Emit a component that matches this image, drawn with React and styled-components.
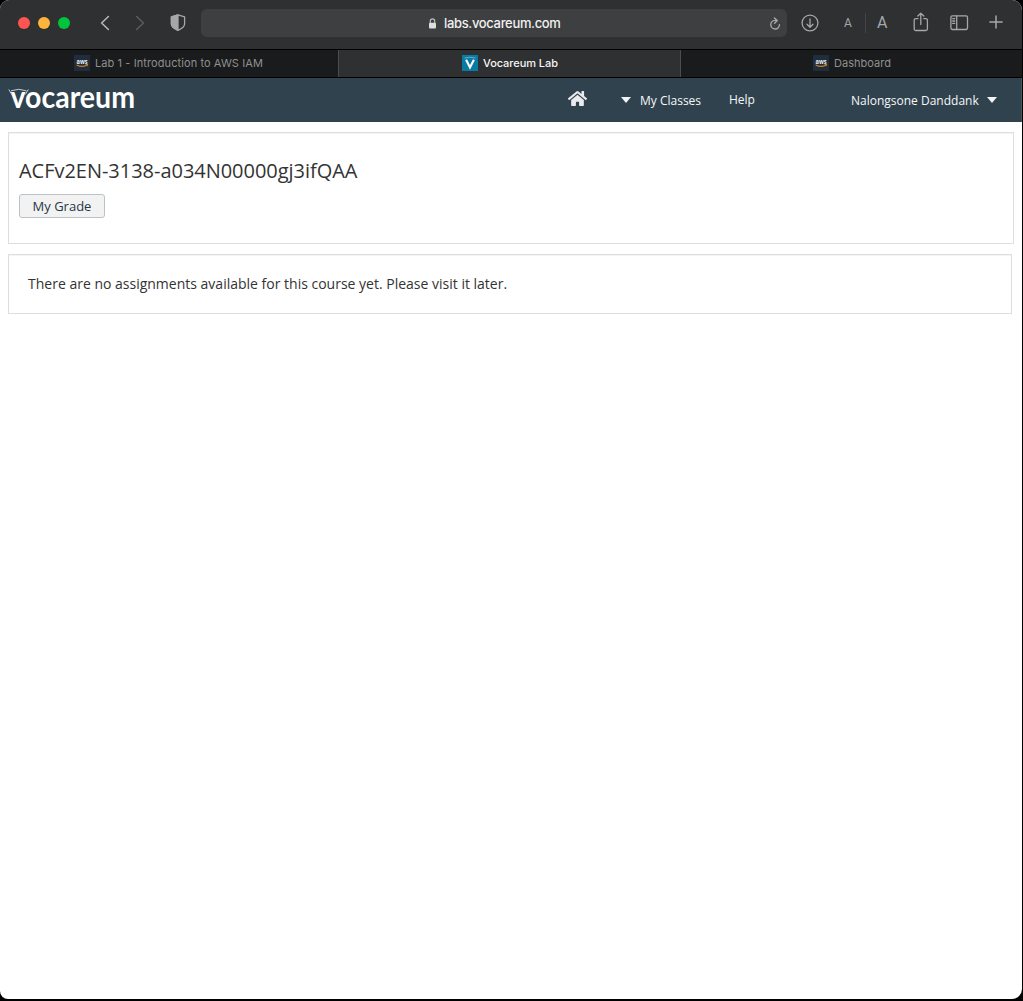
import React from 'react';
import styled, { createGlobalStyle } from 'styled-components';
import { FaHome } from 'react-icons/fa';

const Global = createGlobalStyle`
  * { box-sizing: border-box; }
  html, body { margin: 0; background: #000; }
  #root { height: 1001px; overflow: hidden; }
`;

const Window = styled.div`
  width: 1022px;
  height: 999px;
  display: flex;
  flex-direction: column;
  overflow: hidden;
  background: #fff;
  border-radius: 9px 10px 10px 8px;
  font-family: 'Open Sans', 'Noto Sans', sans-serif;
`;

const Toolbar = styled.header`
  height: 50px;
  flex: none;
  display: flex;
  align-items: flex-start;
  background: #2f3032;
  border-bottom: 1px solid #000;
  padding-left: 18px;
`;

const Lights = styled.div`
  display: flex;
  gap: 8px;
  padding-top: 17px;
`;

const Light = styled.span`
  width: 12px;
  height: 12px;
  border-radius: 50%;
  background: ${(p) => p.$color};
`;

const Glyph = styled.svg`
  display: block;
  flex: none;
  fill: none;
  stroke: ${(p) => p.$color || '#a6a7a8'};
  stroke-width: ${(p) => p.$weight || 1.3};
  stroke-linecap: round;
  stroke-linejoin: round;
  margin-left: ${(p) => p.$left || 0}px;
  margin-top: ${(p) => p.$top || 0}px;
`;

const Address = styled.div`
  display: flex;
  align-items: center;
  width: 586px;
  height: 28px;
  margin: 9px 0 0 15px;
  border-radius: 6px;
  background: #3e3f41;
  padding-left: 227px;
`;

const Url = styled.span`
  width: 118px;
  margin-left: 7px;
  white-space: nowrap;
  font: 500 13px/28px Inter, sans-serif;
  letter-spacing: -0.34px;
  color: #f1f1f1;
`;

const SizeLetter = styled.span`
  width: 10px;
  margin-left: ${(p) => p.$left}px;
  margin-top: 13px;
  text-align: center;
  font: 400 ${(p) => p.$size}px/20px Roboto, sans-serif;
  color: #a6a7a8;
`;

const Divider = styled.span`
  width: 1px;
  height: 20px;
  margin: 13px 0 0 12px;
  background: #434446;
`;

const Tabs = styled.nav`
  height: 28px;
  flex: none;
  display: grid;
  grid-template-columns: 338px 343px 1fr;
  border-bottom: 1px solid #000;
  background: #1a1b1c;
`;

const Tab = styled.div`
  display: flex;
  align-items: flex-start;
  gap: 5px;
  padding-left: ${(p) => p.$inset}px;
  background: ${(p) => (p.$active ? '#2f3032' : '#1a1b1c')};
  border: solid #4c4d4e;
  border-width: ${(p) => (p.$active ? '0 1px' : '0')};
  color: ${(p) => (p.$active ? '#f5f5f5' : '#8f9091')};
  font: ${(p) => (p.$active ? 500 : 400)} 11px/27px Inter, sans-serif;
  letter-spacing: ${(p) => p.$track || 0}px;
  white-space: nowrap;
`;

const Favicon = styled.svg`
  display: block;
  flex: none;
  width: 16px;
  height: 16px;
  margin-top: 5px;
  letter-spacing: 0;
`;

const Navbar = styled.div`
  height: 44px;
  flex: none;
  display: flex;
  align-items: flex-start;
  background: #30424e;
  color: #f6f7f8;
  border-right: 1px solid #465661;
`;

const Logo = styled.svg`
  display: block;
  flex: none;
  width: 140px;
  height: 44px;
  font-family: Lato, sans-serif;
  font-weight: 700;
  fill: #fff;
`;

const HomeIcon = styled(FaHome)`
  flex: none;
  width: 19px;
  height: 19px;
  margin: 11px 1px 0 428px;
  color: #e9ebec;
`;

const NavText = styled.span`
  flex: none;
  width: ${(p) => p.$width}px;
  margin-left: ${(p) => p.$left}px;
  margin-top: ${(p) => p.$top}px;
  font-size: 12px;
  line-height: 18px;
  white-space: nowrap;
`;

const Caret = styled.span`
  flex: none;
  margin: 19px 0 0 ${(p) => p.$left}px;
  border: solid transparent;
  border-width: 6px 5px 0;
  border-top-color: #f1f3f4;
`;

const Page = styled.main`
  padding: 10px 8px;
  display: flex;
  flex-direction: column;
  gap: 10px;
`;

const Panel = styled.section`
  width: ${(p) => p.$width}px;
  height: ${(p) => p.$height}px;
  padding: ${(p) => p.$pad};
  border: 1px solid #dddede;
  box-shadow: inset 0 1px 1px rgba(0, 0, 0, 0.05);
  color: #333;
`;

const Title = styled.h1`
  margin: 0 0 9px;
  font-weight: 400;
  font-size: 20px;
  line-height: 28px;
  letter-spacing: -0.03px;
`;

const Button = styled.button`
  display: block;
  width: 86px;
  height: 24px;
  padding: 0;
  border: 1px solid #b9c2c7;
  border-radius: 3px;
  background: #f2f2f2;
  color: #263845;
  font: 13px/22px 'Open Sans', sans-serif;
`;

const Message = styled.p`
  margin: 0;
  font-size: 14px;
  line-height: 20px;
`;

const AwsIcon = () => (
  <Favicon viewBox="0 0 16 16">
    <rect width="16" height="16" fill="#202d3d" />
    <text x="2.5" y="8.5" fontFamily="Open Sans, sans-serif" fontWeight="700" fontSize="6.7" textLength="11" lengthAdjust="spacingAndGlyphs" fill="#f0f2f4">aws</text>
    <path d="M2.6 9.9Q8 12.8 12.6 10.2M11.6 9.5h1.9l-.5 1.7" fill="none" stroke="#c77d28" strokeWidth="1.1" />
  </Favicon>
);

const VocareumIcon = () => (
  <Favicon viewBox="0 0 16 16">
    <rect width="16" height="16" fill="#087ba5" />
    <path d="M4.1 4.7 8 12.4 11.9 4.7" fill="none" stroke="#fff" strokeWidth="2.1" />
    <path d="M2.5 3Q8 1.5 13.5 3" fill="none" stroke="#8bc3d8" strokeWidth=".7" />
  </Favicon>
);

export default function App() {
  return (
    <>
      <Global />
      <Window>
        <Toolbar>
          <Lights>
            <Light $color="#ff5552" />
            <Light $color="#ffb53c" />
            <Light $color="#00c53c" />
          </Lights>
          <Glyph width="10" height="16" $left={30} $top={15} $weight={1.6} $color="#b4b5b6"><path d="M8.4 1.5 1.6 8l6.8 6.5" /></Glyph>
          <Glyph width="10" height="16" $left={25} $top={15} $weight={1.5} $color="#5b5c5e"><path d="M1.6 1.5 8.4 8l-6.8 6.5" /></Glyph>
          <Glyph width="16" height="18" $left={25} $top={14} $weight={1.3}>
            <path d="M8 .9 14.6 2.8v7.3c0 3-2.8 4.6-6.6 6.2-3.8-1.6-6.6-3.2-6.6-6.2V2.8Z" />
            <path d="M8 .9v15.4c-3.8-1.6-6.6-3.2-6.6-6.2V2.8Z" fill="#a6a7a8" />
          </Glyph>
          <Address>
            <svg width="9" height="11" viewBox="0 0 9 11">
              <path d="M2.3 5V3a2.2 2.2 0 0 1 4.4 0v2" fill="none" stroke="#bcbdbe" strokeWidth="1.2" />
              <rect x="1" y="4.7" width="7" height="5.7" rx="1" fill="#dededf" />
            </svg>
            <Url>labs.vocareum.com</Url>
            <Glyph width="12" height="13" $left={207} $top={1} $weight={1.4}><path d="M8 3.4H6A4.3 4.3 0 1 0 10.4 7.6M5.4.9 8.2 3.5 5.6 6.2" /></Glyph>
          </Address>
          <Glyph width="18" height="18" $left={14} $top={14}><circle cx="9" cy="9" r="7.9" /><path d="M9 4.8v8.2M6 10.2l3 3 3-3" /></Glyph>
          <SizeLetter $left={24} $size={12}>A</SizeLetter>
          <Divider />
          <SizeLetter $left={11} $size={16}>A</SizeLetter>
          <Glyph width="16" height="20" $left={26} $top={12} $weight={1.3}><path d="M5 6.6H2.8C1.7 6.6 1.2 7 1.2 8v9c0 1 .5 1.5 1.6 1.5h10c1 0 1.6-.5 1.6-1.5V8c0-1-.5-1.4-1.6-1.4h-2M7.8 12.5V1.3M4.8 4l3-2.8 3 2.8" /></Glyph>
          <Glyph width="19" height="16" $left={21} $top={15} $weight={1.3}><rect x=".9" y=".9" width="16.6" height="13.6" rx="1.4" /><path d="M6.7 1v13.4M2.7 3.6h2M2.7 6h2M2.7 8.4h2" /></Glyph>
          <Glyph width="14" height="14" $left={20} $top={15} $weight={1.5}><path d="M7 .9v12.2M.9 7h12.2" /></Glyph>
        </Toolbar>
        <Tabs>
          <Tab $inset={74} $track={0.09}><AwsIcon />Lab 1 - Introduction to AWS IAM</Tab>
          <Tab $inset={123} $track={-0.06} $active><VocareumIcon />Vocareum Lab</Tab>
          <Tab $inset={132} $track={0.04}><AwsIcon />Dashboard</Tab>
        </Tabs>
        <Navbar>
          <Logo viewBox="0 0 140 44">
            <text x="10.5" y="30" fontSize="29.5" textLength="124.5" lengthAdjust="spacingAndGlyphs">vocareum</text>
            <path d="m8.8 11.5 3 5M28.3 11.5l-3 5M11 12.8Q18.5 9.8 26.5 12.8" fill="none" stroke="#c5ccd1" strokeWidth="1" />
          </Logo>
          <HomeIcon />
          <Caret $left={33} />
          <NavText $left={9} $top={14} $width={62}>My Classes</NavText>
          <NavText $left={27} $top={13} $width={28}>Help</NavText>
          <NavText $left={94} $top={14} $width={128}>Nalongsone Danddank</NavText>
          <Caret $left={8} />
        </Navbar>
        <Page>
          <Panel $width={1006} $height={112} $pad="24px 10px">
            <Title>ACFv2EN-3138-a034N00000gj3ifQAA</Title>
            <Button>My Grade</Button>
          </Panel>
          <Panel $width={1004} $height={60} $pad="19px">
            <Message>There are no assignments available for this course yet. Please visit it later.</Message>
          </Panel>
        </Page>
      </Window>
    </>
  );
}
